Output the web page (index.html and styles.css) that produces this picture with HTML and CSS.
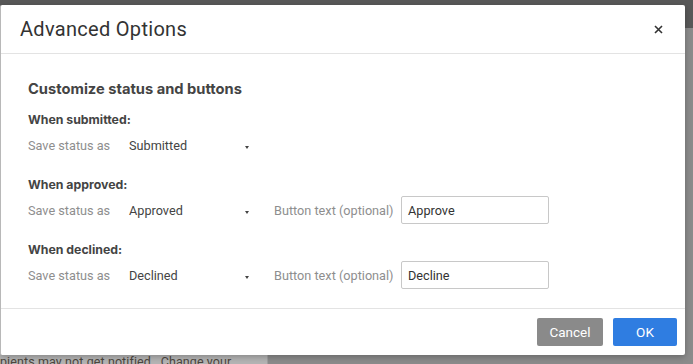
FILE: index.html
```html
<!DOCTYPE html>
<html>
<head>
<meta charset="utf-8">
<link rel="stylesheet" href="styles.css">
</head>
<body>
<div class="page">
  <div class="page-top"></div>
  <div class="page-main">
    <div class="page-left">
      <p class="page-note">pients may not get notified.&nbsp; Change your</p>
    </div>
    <div class="page-right"></div>
  </div>
</div>

<div class="modal">
  <div class="modal-header">
    <h1 class="modal-title">Advanced Options</h1>
    <svg class="modal-close" width="9" height="9" viewBox="0 0 9 9"><path d="M1 1L8 8M8 1L1 8" stroke="#333" stroke-width="1.6" fill="none"/></svg>
  </div>
  <div class="modal-body">
    <h2 class="body-title">Customize status and buttons</h2>

    <div class="section">
      <div class="section-heading">When submitted:</div>
      <div class="row">
        <span class="label">Save status as</span>
        <span class="select">Submitted<span class="caret"></span></span>
      </div>
    </div>

    <div class="section">
      <div class="section-heading">When approved:</div>
      <div class="row">
        <span class="label">Save status as</span>
        <span class="select">Approved<span class="caret"></span></span>
        <span class="label label-btn">Button text (optional)</span>
        <span class="input">Approve</span>
      </div>
    </div>

    <div class="section">
      <div class="section-heading">When declined:</div>
      <div class="row">
        <span class="label">Save status as</span>
        <span class="select">Declined<span class="caret"></span></span>
        <span class="label label-btn">Button text (optional)</span>
        <span class="input">Decline</span>
      </div>
    </div>
  </div>
  <div class="modal-footer">
    <button class="btn btn-cancel">Cancel</button>
    <button class="btn btn-ok">OK</button>
  </div>
</div>
</body>
</html>
```
FILE: styles.css
```css
* { box-sizing: border-box; }
html, body {
  margin: 0;
  padding: 0;
  width: 693px;
  height: 364px;
  overflow: hidden;
  font-family: Roboto, "Noto Sans", sans-serif;
}
.page {
  position: relative;
  width: 693px;
  height: 364px;
  display: flex;
  flex-direction: column;
  background: #8d8d8d;
}
.page-top {
  height: 28px;
  background: #585858;
}
.page-main {
  flex: 1;
  display: flex;
}
.page-left {
  width: 268px;
  background: #b4b4b4;
  border-right: 1px solid #a0a0a0;
  display: flex;
  flex-direction: column;
  justify-content: flex-end;
}
.page-right {
  flex: 1;
  background: #8b8b8b;
}
.page-note {
  margin: 0 0 -5px 0;
  font-size: 12.5px;
  line-height: 15px;
  color: #4e463e;
  letter-spacing: 0.1px;
  white-space: nowrap;
}
.modal {
  position: absolute;
  left: 0;
  top: 5px;
  width: 685px;
  height: 350px;
  background: #fff;
  border-left: 1px solid #b8b8b8;
  border-radius: 2px;
  display: flex;
  flex-direction: column;
  box-shadow: 0 2px 6px rgba(0,0,0,0.25);
}
.modal-header {
  height: 49px;
  border-bottom: 1px solid #e3e3e3;
  display: flex;
  align-items: center;
  justify-content: space-between;
  padding: 0 22px 0 19px;
}
.modal-title {
  margin: 0;
  font-size: 20px;
  font-weight: 400;
  color: #333;
  letter-spacing: 0.3px;
}
.modal-close {
  display: block;
  margin-top: 1px;
}
.modal-body {
  flex: 1;
  padding: 25px 28px 0 27px;
  display: flex;
  flex-direction: column;
}
.body-title {
  margin: 0 0 11px 0;
  height: 20px;
  line-height: 20px;
  font-family: Inter, "Noto Sans", sans-serif;
  font-size: 14.7px;
  font-weight: 700;
  color: #444;
}
.section {
  display: flex;
  flex-direction: column;
  margin-bottom: 16px;
}
.section-heading {
  height: 20px;
  line-height: 20px;
  font-family: Inter, "Noto Sans", sans-serif;
  font-size: 12.3px;
  font-weight: 700;
  color: #444;
  margin-bottom: 1px;
}
.row {
  height: 28px;
  display: flex;
  align-items: center;
  font-size: 12.7px;
  white-space: nowrap;
}
.label {
  color: #8e8e8e;
  width: 101px;
  flex-shrink: 0;
}
.label-btn {
  width: 127px;
}
.select {
  color: #444;
  width: 145px;
  flex-shrink: 0;
  display: flex;
  align-items: center;
  position: relative;
}
.caret {
  position: absolute;
  left: 116px;
  top: 8px;
  width: 0;
  height: 0;
  border-left: 2.5px solid transparent;
  border-right: 2.5px solid transparent;
  border-top: 3px solid #444;
}
.input {
  width: 148px;
  height: 28px;
  flex-shrink: 0;
  border: 1px solid #c8c8c8;
  border-radius: 2px;
  padding: 0 6px;
  display: flex;
  align-items: center;
  color: #333;
}
.modal-footer {
  height: 47px;
  border-top: 1px solid #e3e3e3;
  display: flex;
  justify-content: flex-end;
  align-items: flex-start;
  gap: 10px;
  padding: 9px 8px 0 0;
}
.btn {
  height: 28px;
  border: none;
  border-radius: 2px;
  color: #fff;
  font-family: Roboto, "Noto Sans", sans-serif;
  font-size: 13.5px;
  padding: 0;
}
.btn-cancel {
  width: 66px;
  background: #8a8a8a;
}
.btn-ok {
  width: 64px;
  background: #2f7de1;
}
```
